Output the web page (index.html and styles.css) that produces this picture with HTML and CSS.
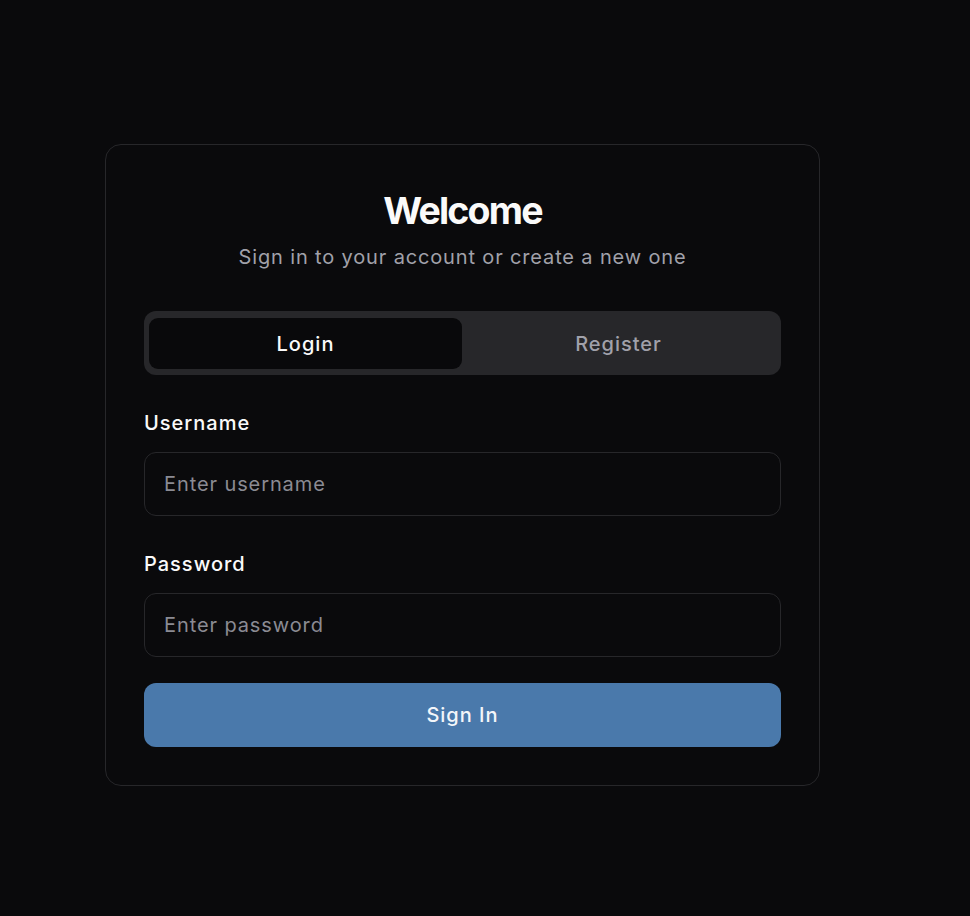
FILE: index.html
```html
<!DOCTYPE html>
<html lang="en">
<head>
<meta charset="utf-8">
<title>Welcome</title>
<link rel="stylesheet" href="styles.css">
</head>
<body>
<main class="page">
  <section class="card">
    <header class="card-header">
      <h1 class="title">Welcome</h1>
      <p class="subtitle">Sign in to your account or create a new one</p>
    </header>
    <div class="tabs">
      <button class="tab tab-active" type="button">Login</button>
      <button class="tab" type="button">Register</button>
    </div>
    <form class="form">
      <div class="field">
        <label class="label" for="username">Username</label>
        <input class="input" id="username" type="text" placeholder="Enter username">
      </div>
      <div class="field">
        <label class="label" for="password">Password</label>
        <input class="input" id="password" type="password" placeholder="Enter password">
      </div>
      <button class="submit" type="button">Sign In</button>
    </form>
  </section>
</main>
</body>
</html>
```
FILE: styles.css
```css
* { box-sizing: border-box; }
html, body {
  margin: 0;
  padding: 0;
  background: #0a0a0c;
  font-family: "Inter", "Noto Sans", sans-serif;
  color: #fafafa;
}
.page {
  padding: 144px 0 0 105px;
}
.card {
  width: 715px;
  height: 642px;
  border: 1px solid #27272a;
  border-radius: 16px;
  background: #0a0a0c;
  padding: 43px 38px 37px;
  display: flex;
  flex-direction: column;
}
.card-header {
  display: flex;
  flex-direction: column;
  align-items: center;
  text-align: center;
}
.title {
  margin: 0;
  font-size: 37.5px;
  line-height: 45px;
  font-weight: 700;
  letter-spacing: -1.8px;
  color: #fafafa;
}
.subtitle {
  margin: 9px 0 0;
  font-size: 20px;
  line-height: 30px;
  letter-spacing: 0.85px;
  color: #a1a1aa;
}
.tabs {
  margin-top: 39px;
  height: 64px;
  padding: 7px 6px 6px 5px;
  background: #27272a;
  border-radius: 12px;
  display: grid;
  grid-template-columns: 1fr 1fr;
}
.tab {
  border: 0;
  background: transparent;
  font-family: inherit;
  font-size: 20px;
  font-weight: 500;
  letter-spacing: 1px;
  color: #a1a1aa;
  border-radius: 9px;
  padding: 0;
  cursor: pointer;
}
.tab-active {
  background: #09090b;
  color: #fafafa;
}
.form {
  margin-top: 36px;
  display: flex;
  flex-direction: column;
}
.field {
  display: flex;
  flex-direction: column;
  gap: 17px;
  margin-bottom: 36px;
}
.field + .field { margin-bottom: 26px; }
.label {
  font-size: 20px;
  line-height: 24px;
  font-weight: 500;
  letter-spacing: 1px;
  color: #fafafa;
}
.input {
  height: 64px;
  border: 1px solid #27272a;
  border-radius: 12px;
  background: #0a0a0c;
  padding: 0 19px;
  font-family: inherit;
  font-size: 20px;
  letter-spacing: 0.9px;
  color: #fafafa;
  outline: none;
}
.input::placeholder { color: #8b8b93; }
.submit {
  height: 64px;
  border: 0;
  border-radius: 12px;
  background: #4a79ab;
  color: #f3f6fa;
  font-family: inherit;
  font-size: 20px;
  font-weight: 500;
  letter-spacing: 1px;
  cursor: pointer;
}
```
